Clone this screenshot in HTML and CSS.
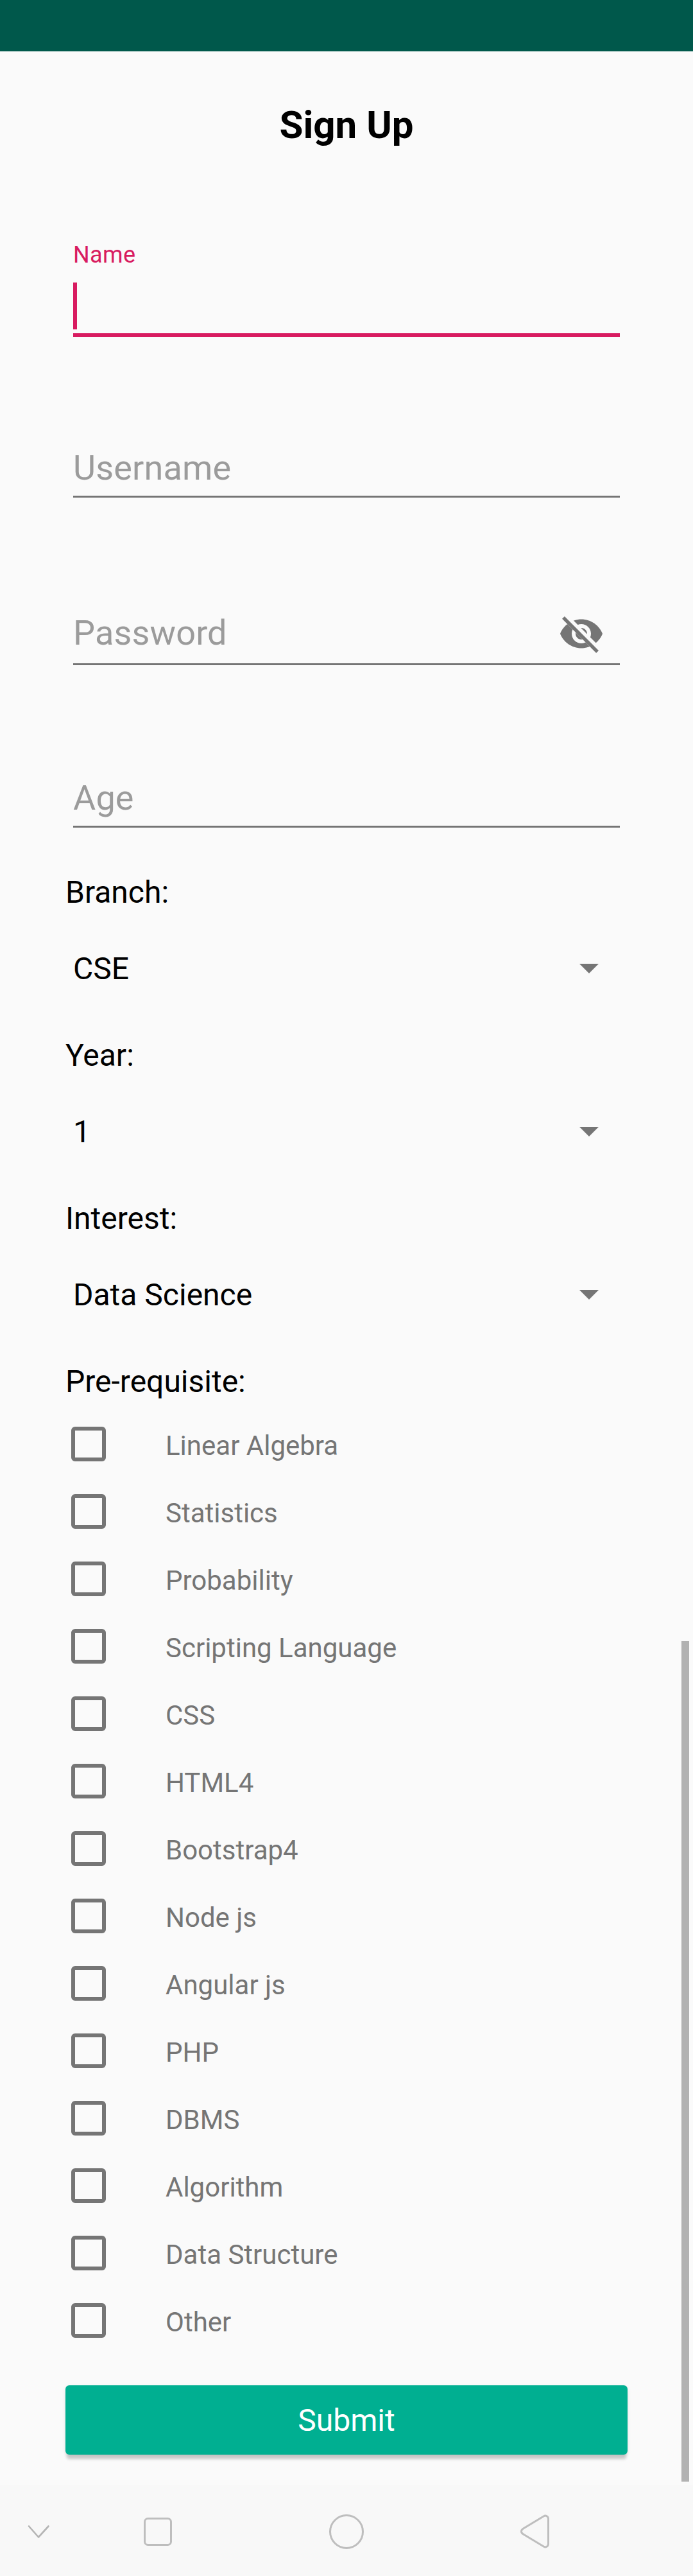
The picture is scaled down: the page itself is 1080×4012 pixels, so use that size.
FILE: index.html
```html
<!DOCTYPE html>
<html lang="en">
<head>
<meta charset="utf-8">
<title>Sign Up</title>
<link rel="stylesheet" href="styles.css">
</head>
<body>
<div class="status-bar"></div>
<main class="content">
  <h1 class="title">Sign Up</h1>
  <form class="form">
    <div class="field field-name">
      <span class="floating-label">Name</span>
      <span class="caret"></span>
    </div>
    <div class="field field-username"><span class="hint">Username</span></div>
    <div class="field field-password">
      <span class="hint">Password</span>
      <svg class="eye" viewBox="0 0 24 24">
        <clipPath id="strike-gap"><path d="M2,4.27L19.73,22L22.27,19.46L4.54,1.73V1H23V23H1V4.27Z"/></clipPath>
        <path clip-path="url(#strike-gap)" fill="#757575" d="M12,4.5C7,4.5 2.73,7.61 1,12c1.73,4.39 6,7.5 11,7.5s9.27,-3.11 11,-7.5c-1.73,-4.39 -6,-7.5 -11,-7.5zM12,17c-2.76,0 -5,-2.24 -5,-5s2.24,-5 5,-5 5,2.24 5,5 -2.24,5 -5,5zM12,9c-1.66,0 -3,1.34 -3,3s1.34,3 3,3 3,-1.34 3,-3 -1.34,-3 -3,-3z"/>
        <path d="M2.65,3.65L20.35,21.35" stroke="#757575" stroke-width="1.8"/>
      </svg>
    </div>
    <div class="field field-age"><span class="hint">Age</span></div>

    <div class="label">Branch:</div>
    <div class="spinner"><span>CSE</span><svg class="arrow" viewBox="0 0 30 15"><path d="M0 0H30L15 15Z"/></svg></div>
    <div class="label">Year:</div>
    <div class="spinner"><span>1</span><svg class="arrow" viewBox="0 0 30 15"><path d="M0 0H30L15 15Z"/></svg></div>
    <div class="label">Interest:</div>
    <div class="spinner"><span>Data Science</span><svg class="arrow" viewBox="0 0 30 15"><path d="M0 0H30L15 15Z"/></svg></div>
    <div class="label">Pre-requisite:</div>
    <ul class="options">
      <li class="option"><span class="box"></span><span class="option-text">Linear Algebra</span></li>
      <li class="option"><span class="box"></span><span class="option-text">Statistics</span></li>
      <li class="option"><span class="box"></span><span class="option-text">Probability</span></li>
      <li class="option"><span class="box"></span><span class="option-text">Scripting Language</span></li>
      <li class="option"><span class="box"></span><span class="option-text">CSS</span></li>
      <li class="option"><span class="box"></span><span class="option-text">HTML4</span></li>
      <li class="option"><span class="box"></span><span class="option-text">Bootstrap4</span></li>
      <li class="option"><span class="box"></span><span class="option-text">Node js</span></li>
      <li class="option"><span class="box"></span><span class="option-text">Angular js</span></li>
      <li class="option"><span class="box"></span><span class="option-text">PHP</span></li>
      <li class="option"><span class="box"></span><span class="option-text">DBMS</span></li>
      <li class="option"><span class="box"></span><span class="option-text">Algorithm</span></li>
      <li class="option"><span class="box"></span><span class="option-text">Data Structure</span></li>
      <li class="option"><span class="box"></span><span class="option-text">Other</span></li>
    </ul>
    <button class="submit" type="button">Submit</button>
  </form>
  <div class="scrollbar"></div>
</main>
<nav class="nav-bar">
  <svg class="nav-icons" viewBox="0 4 1080 142" fill="none" stroke="#bebebe" stroke-width="3">
    <path d="M45 68.5L60 85.5L75.5 68.5" stroke="#b5b5b5" stroke-width="2.6" stroke-linecap="round" stroke-linejoin="round"/>
    <rect x="225.5" y="56.5" width="41" height="41" rx="5"/>
    <circle cx="540" cy="77" r="25.5"/>
    <path d="M847.6 52.7C850.5 51 854.5 53 854.5 57V96C854.5 100 850.5 102 847.6 100.3L815.300 80.8C811.5 78.5 811.5 74.5 815.3 72.2Z"/>
  </svg>
</nav>
</body>
</html>
```
FILE: styles.css
```css
* { box-sizing: border-box; }

body {
  margin: 0;
  height: 4012px;
  display: flex;
  flex-direction: column;
  background: #fafafa;
  color: #000;
  font-family: Roboto, "Liberation Sans", sans-serif;
}

.status-bar { height: 80px; background: #00584b; }

.content {
  position: relative;
  height: 3790px;
  padding: 80px 102px 0;
}

.title {
  margin: 0;
  text-align: center;
  font-size: 60px;
  line-height: 70px;
  font-weight: 700;
}

.form { display: flex; flex-direction: column; }

.field {
  margin: 0 12px;
  display: flex;
  align-items: flex-end;
  justify-content: space-between;
  border-bottom: 3px solid #757575;
}

.field-name {
  height: 149px;
  margin-top: 146px;
  flex-direction: column;
  align-items: flex-start;
  border-bottom: 6px solid #d81b60;
  padding-bottom: 6px;
}

.floating-label {
  color: #d81b60;
  font-size: 36px;
  line-height: 43px;
  letter-spacing: 0.4px;
}

.caret { width: 6px; height: 73px; background: #d81b60; }

.hint {
  color: #9b9b9b;
  font-size: 54px;
  line-height: 64px;
  letter-spacing: 0.15px;
}

.field-username { height: 250px; padding-bottom: 11px; }
.field-password { height: 261px; padding-bottom: 15px; }
.field-age { height: 253px; padding-bottom: 11px; }

.eye { width: 72px; height: 72px; margin-right: 24px; margin-bottom: -5px; }

.label {
  height: 56px;
  margin-top: 73px;
  font-size: 48px;
  line-height: 56px;
}

.spinner {
  height: 72px;
  margin-top: 53px;
  padding: 3px 45px 0 12px;
  display: flex;
  align-items: center;
  justify-content: space-between;
  font-size: 48px;
  line-height: 56px;
}

.arrow { width: 30px; height: 15px; fill: #757575; }

.options { list-style: none; margin: 17px 0 0; padding: 0; }

.option {
  height: 105px;
  padding: 0 0 1px 9px;
  display: flex;
  align-items: center;
  gap: 93px;
  color: #757575;
  font-size: 42px;
  line-height: 50px;
}

.option-text { margin-top: 5px; }

.box {
  width: 54px;
  height: 54px;
  border: 6px solid #757575;
  border-radius: 6px;
}

.submit {
  height: 108px;
  margin-top: 48px;
  padding: 2px 0 0;
  border: 0;
  border-radius: 6px;
  background: #00af91;
  color: #fff;
  font: 400 48px/56px Roboto, "Liberation Sans", sans-serif;
  box-shadow: 0 9px 4px -2px rgba(0, 0, 0, 0.18), 0 2px 6px rgba(0, 0, 0, 0.08);
}

/* overlays the right edge of the scrolling form */
.scrollbar {
  position: absolute;
  right: 6px;
  bottom: 5px;
  width: 12px;
  height: 1309px;
  background: #b2b2b2;
}

.nav-bar { height: 142px; background: #f8f8f8; }
.nav-icons { display: block; width: 1080px; height: 142px; }
```
